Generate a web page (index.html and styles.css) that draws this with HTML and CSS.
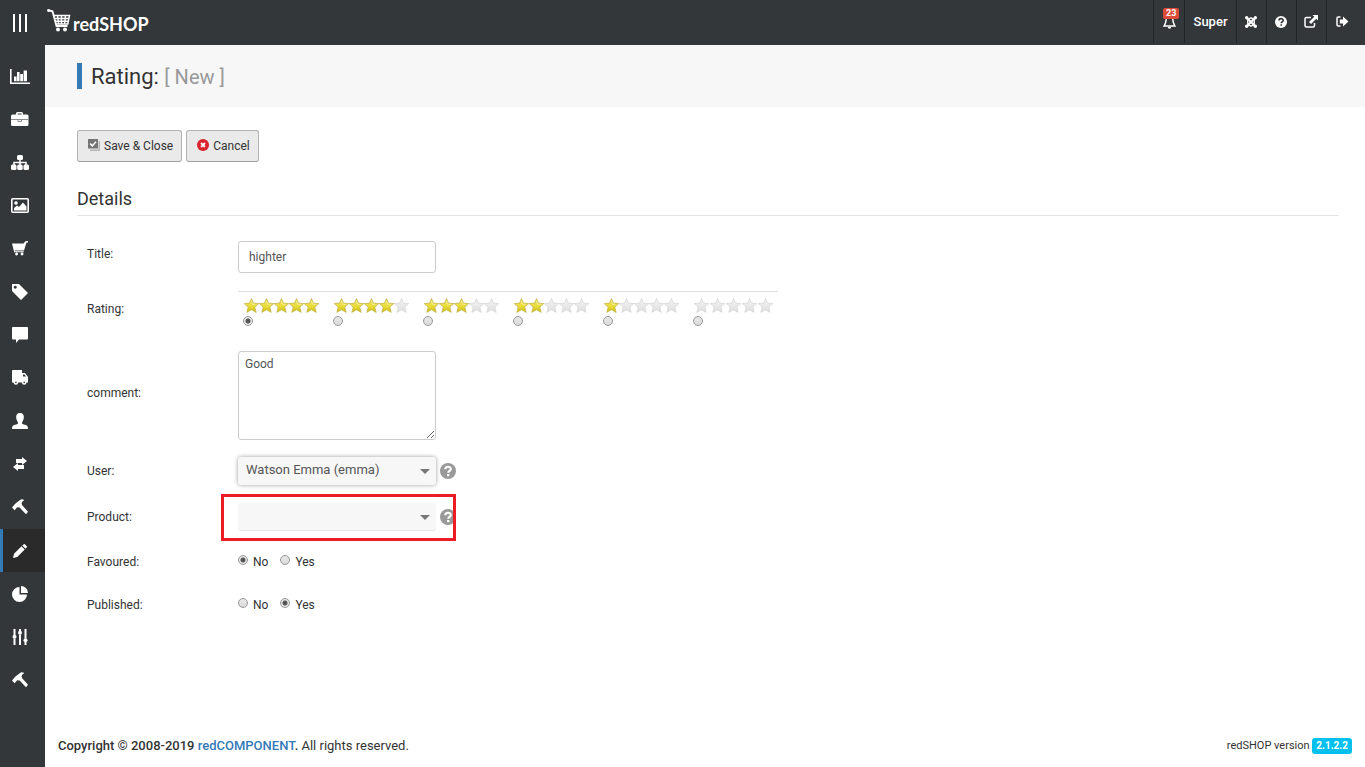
FILE: index.html
```html
<!DOCTYPE html>
<html lang="en">
<head>
<meta charset="utf-8">
<title>Rating: New - redSHOP</title>
<link rel="stylesheet" href="styles.css">
</head>
<body>
<svg class="defs" aria-hidden="true">
  <defs>
    <linearGradient id="gold" x1="0" y1="0" x2="0" y2="1"><stop offset="0" stop-color="#eee36a"/><stop offset="0.55" stop-color="#e9dc3c"/><stop offset="1" stop-color="#cdbd10"/></linearGradient>
    <linearGradient id="silver" x1="0" y1="0" x2="0" y2="1"><stop offset="0" stop-color="#f4f4f4"/><stop offset="1" stop-color="#dedede"/></linearGradient>
    <symbol id="star-on" viewBox="0 0 15 15"><path d="M7.5 .5l2 4.600 5.300 .5-4 3.500 1.400 5.300-4.700-2.700-4.700 2.700 1.400-5.300L.2 5.600l5.300-.5z" fill="url(#gold)" stroke="#c0b04a" stroke-width=".7"/><path d="M7.500 3.200l1 3 3 .2" fill="none" stroke="#f8f3a8" stroke-width=".8"/></symbol>
    <symbol id="star-off" viewBox="0 0 15 15"><path d="M7.500 .5l2 4.600 5.300 .5-4 3.500 1.400 5.300-4.700-2.700-4.700 2.700 1.400-5.300L.2 5.600l5.300-.5z" fill="url(#silver)" stroke="#d4d4d4" stroke-width=".7"/></symbol>
    <symbol id="hammer" viewBox="0 0 16 16"><path d="M0 8.500L3.200 4.800 8 .9C9.300 0 11 .2 12.300 1.200L10.300 2.600 9.600 4.300 10 6 16 12.800 14 15.200 7.600 8.600 5.200 8.300 2.600 11.200z" fill="#fff"/></symbol>
    <symbol id="help" viewBox="0 0 16 16"><circle cx="8" cy="8" r="8" fill="#999"/><path d="M5.300 6.300C5.300 2.900 10.800 3 10.800 6c0 1.900-2.500 1.900-2.500 3.700" fill="none" stroke="#fff" stroke-width="2.200"/><path d="M7.100 11h2.300v2.200H7.100z" fill="#fff"/></symbol>
  </defs>
</svg>

<header class="topbar">
  <button class="menu-toggle" type="button" aria-label="Toggle navigation"><i></i><i></i><i></i></button>
  <a class="logo" href="#">
    <svg width="24" height="24" viewBox="0 0 24 24" fill="none" stroke="#fff"><circle cx="1.500" cy="1.500" r="1.400" fill="#fff" stroke="none"/><path d="M2 1.500l3.500.8L9.500 17h11" stroke-width="1.800"/><path d="M6.500 6.500H22.500L20.800 15H9M7.200 9.500h14.500M8 12.300h13M10.500 6.500l1.200 8.500M14.500 6.500V15M18.500 6.500L17.600 15" stroke-width="1.500"/><circle cx="11" cy="20.500" r="2" fill="#fff" stroke="none"/><circle cx="18" cy="20.500" r="2" fill="#fff" stroke="none"/></svg>
    <span>redSHOP</span>
  </a>
  <nav class="topnav" aria-label="User">
    <a class="bell" href="#" aria-label="Notifications"><svg width="13" height="14" viewBox="0 0 13 14"><path d="M4 1C3 3 3.600 7 1.200 11h10.600C9.400 7 10 3 9 1" fill="none" stroke="#fff" stroke-width="1.500"/><path d="M4.800 12h3.400a1.700 1.700 0 0 1-3.400 0z" fill="#fff"/></svg><span class="badge">23</span></a>
    <a class="user" href="#">Super</a>
    <a class="tool" href="#" aria-label="Joomla"><svg width="12" height="12" viewBox="0 0 12 12"><g fill="none" stroke="#fff" stroke-width="2"><path d="M2 2l8 8M10 2l-8 8"/><path d="M3 3.500L6 1.800 9 3.500M3 8.500l3 1.700 3-1.700M2.800 3.500v5M9.200 3.500v5" stroke-width="1.400"/></g><g fill="#fff"><circle cx="1.700" cy="1.700" r="1.700"/><circle cx="10.300" cy="1.700" r="1.700"/><circle cx="1.700" cy="10.300" r="1.700"/><circle cx="10.300" cy="10.300" r="1.700"/></g></svg></a>
    <a class="tool" href="#" aria-label="Help"><svg width="12" height="12" viewBox="0 0 12 12"><circle cx="6" cy="6" r="6" fill="#fff"/><path d="M4 4.600C4 2 8.200 2.100 8.200 4.400 8.200 5.800 6.200 5.700 6.200 7.200" fill="none" stroke="#33373a" stroke-width="1.600"/><path d="M5.400 8.200H7v1.600H5.400z" fill="#33373a"/></svg></a>
    <a class="tool" href="#" aria-label="Open site"><svg width="14" height="13" viewBox="0 0 14 13"><path d="M7 2.500H2.500Q1 2.500 1 4v6.500Q1 12 2.500 12H9q1.500 0 1.500-1.500V8" fill="none" stroke="#fff" stroke-width="1.500"/><path d="M8.500 0H14v5.500L12.300 3.800 7 9 5 7l5.300-5.300z" fill="#fff"/></svg></a>
    <a class="tool last" href="#" aria-label="Log out"><svg width="13" height="11" viewBox="0 0 13 11"><path d="M4.500 1H2.300Q1 1 1 2.300v6.400Q1 10 2.300 10h2.200" fill="none" stroke="#fff" stroke-width="1.500"/><path d="M3.800 3.500H7V.5l5.500 5L7 10.500v-3H3.800z" fill="#fff"/></svg></a>
  </nav>
</header>

<div class="shell">
  <nav class="sidebar" aria-label="Main">
    <a href="#" aria-label="Statistics"><svg width="20" height="16" viewBox="0 0 20 16" fill="#fff"><path d="M0 0h1.600v13.500H20V15H0zM4 7.500h2.600v4.700H4zM7 3h2.600v9.200H7zM10.200 5h2.800v7.200h-2.800zM13.600 1.500h3.400v10.700h-3.400z"/></svg></a>
    <a href="#" aria-label="Orders"><svg width="18" height="15" viewBox="0 0 18 15"><path d="M5 2.500V1.500Q5 0 6.500 0h4Q12 0 12 1.500v1h4q1.500 0 1.500 1.500v8.500Q17.500 14 16 14H1.500Q0 14 0 12.500V4q0-1.500 1.500-1.500zM6.600 2.500h4v-1h-4z" fill="#fff" fill-rule="evenodd"/><path d="M0 7.500h17.500M7 7.500v2h3.500v-2" fill="none" stroke="#8a8c8e"/></svg></a>
    <a href="#" aria-label="Categories"><svg width="18" height="16" viewBox="0 0 18 16"><path d="M9 4v6M3 11V7.500h12V11" fill="none" stroke="#fff" stroke-width="1.500"/><g fill="#fff"><rect x="6" y="0" width="6" height="5" rx="1.500"/><rect x="0" y="9.500" width="5.500" height="5.500" rx="1.500"/><rect x="6.200" y="9.500" width="5.500" height="5.500" rx="1.500"/><rect x="12.500" y="9.500" width="5.500" height="5.500" rx="1.500"/></g></svg></a>
    <a href="#" aria-label="Media"><svg width="18" height="15" viewBox="0 0 18 15"><rect x=".8" y=".8" width="16.400" height="13.400" rx="1" fill="none" stroke="#fff" stroke-width="1.600"/><circle cx="5" cy="5" r="1.800" fill="#fff"/><path d="M3 12.500V10l3-2.500 2 1.500 4-4.500 3.500 4v4z" fill="#fff"/></svg></a>
    <a href="#" aria-label="Cart"><svg width="16" height="15" viewBox="0 0 16 15"><path d="M0 2.500h11.500L13 .8Q13.500 0 14.500 0H16v1.500h-1.500L12 9.500H2.500L2.800 10.200h9v1H2.200zM4.500 11.600a1.400 1.400 0 1 0 .1 0zM10 11.600a1.400 1.400 0 1 0 .1 0z" fill="#fff"/></svg></a>
    <a href="#" aria-label="Discounts"><svg width="16" height="16" viewBox="0 0 16 16"><path d="M0 0h7l9 9-7 7-9-9zM3.200 1.800a1.500 1.500 0 1 0 .1 0z" fill="#fff" fill-rule="evenodd"/></svg></a>
    <a href="#" aria-label="Communication"><svg width="16" height="16" viewBox="0 0 16 16"><path d="M1 0h14q1 0 1 1v10.500q0 1-1 1H7L4 16v-3.500H1q-1 0-1-1V1q0-1 1-1z" fill="#fff"/></svg></a>
    <a href="#" aria-label="Shipping"><svg width="16" height="15" viewBox="0 0 16 15"><path d="M1 0h9v3h3l3 4v5.500h-1.500a2.300 2.300 0 0 1-4.600 0H6.200a2.300 2.300 0 0 1-4.600 0H0V1q0-1 1-1z" fill="#fff"/><path d="M11 4.400h1.500L14 6.600h-3z" fill="#33373a"/><circle cx="3.900" cy="12.400" r=".8" fill="#33373a"/><circle cx="12.200" cy="12.400" r=".8" fill="#33373a"/></svg></a>
    <a href="#" aria-label="Users"><svg width="16" height="16" viewBox="0 0 16 16"><path d="M8 0c3 0 4.200 2 3.800 5-.3 2.500-1.800 3.500-1.800 5 0 1 1 1.400 3 1.700 2.200.4 3 1.300 3 4.300H0c0-3 .8-3.900 3-4.300 2-.3 3-.7 3-1.700 0-1.500-1.500-2.500-1.800-5C3.800 2 5 0 8 0z" fill="#fff"/></svg></a>
    <a href="#" aria-label="Import / Export"><svg width="14" height="14" viewBox="0 0 14 14"><path d="M3 2h6V0l5 4-5 4V6H3zM11 8v4H5v2L0 10l5-4v2z" fill="#fff"/></svg></a>
    <a href="#" aria-label="Customization"><svg width="16" height="16"><use href="#hammer"/></svg></a>
    <a class="active" href="#" aria-label="Customer input" aria-current="page"><svg width="14" height="14" viewBox="0 0 14 14"><path d="M0 14l1-4.200L8.500 2.300l3.200 3.200L4.200 13zM9.300 1.500L10.500.4q.8-.8 1.600 0l1.500 1.500q.8.800 0 1.600l-1.100 1.200z" fill="#fff"/></svg></a>
    <a href="#" aria-label="Reports"><svg width="16" height="16" viewBox="0 0 16 16"><path d="M7.500 1v7.500H15A7.500 7.500 0 1 1 7.500 1zM9 0a7 7 0 0 1 7 7H9z" fill="#fff"/></svg></a>
    <a href="#" aria-label="Configuration"><svg width="16" height="16" viewBox="0 0 16 16"><path d="M1.500 0h2v6h-2zM1.500 9.500h2V16h-2zM7 0h2v2H7zM7 5.500h2V16H7zM12.500 0h2v9.500h-2zM12.500 13h2v3h-2z" fill="#fff"/><g fill="#fff"><circle cx="2.500" cy="7.800" r="2"/><circle cx="8" cy="3.800" r="2"/><circle cx="13.500" cy="11.300" r="2"/></g></svg></a>
    <a href="#" aria-label="Tools"><svg width="16" height="16"><use href="#hammer"/></svg></a>
  </nav>

  <div class="page">
    <div class="page-title"><h1>Rating: <small>[ New ]</small></h1></div>
    <main class="content">
      <div class="toolbar">
        <button class="btn" type="button"><svg width="12" height="12" viewBox="0 0 12 12"><path d="M2 10.500h8.500V2H12v10H2z" fill="#b5b5b5"/><path d="M0 0h10v9.500H0z" fill="#757575"/><path d="M2 4.500l2.300 2.300L8 2.800" fill="none" stroke="#fff" stroke-width="1.500"/></svg>Save &amp; Close</button>
        <button class="btn" type="button"><svg width="12" height="12" viewBox="0 0 12 12"><circle cx="6" cy="6" r="6" fill="#d9222a"/><path d="M4 4l4 4M8 4L4 8" stroke="#fff" stroke-width="1.800"/></svg>Cancel</button>
      </div>
      <form>
        <h2>Details</h2>
        <div class="rows">
          <div class="row raised"><label for="title">Title:</label><input class="field" id="title" type="text" value="highter"></div>
          <div class="row raised" role="radiogroup" aria-labelledby="rating-label"><span class="label" id="rating-label">Rating:</span>
            <div class="ratings">
              <label><span class="stars"><svg><use href="#star-on"/></svg><svg><use href="#star-on"/></svg><svg><use href="#star-on"/></svg><svg><use href="#star-on"/></svg><svg><use href="#star-on"/></svg></span><input type="radio" name="rating" value="5" aria-label="5 stars" checked></label>
              <label><span class="stars"><svg><use href="#star-on"/></svg><svg><use href="#star-on"/></svg><svg><use href="#star-on"/></svg><svg><use href="#star-on"/></svg><svg><use href="#star-off"/></svg></span><input type="radio" name="rating" value="4" aria-label="4 stars"></label>
              <label><span class="stars"><svg><use href="#star-on"/></svg><svg><use href="#star-on"/></svg><svg><use href="#star-on"/></svg><svg><use href="#star-off"/></svg><svg><use href="#star-off"/></svg></span><input type="radio" name="rating" value="3" aria-label="3 stars"></label>
              <label><span class="stars"><svg><use href="#star-on"/></svg><svg><use href="#star-on"/></svg><svg><use href="#star-off"/></svg><svg><use href="#star-off"/></svg><svg><use href="#star-off"/></svg></span><input type="radio" name="rating" value="2" aria-label="2 stars"></label>
              <label><span class="stars"><svg><use href="#star-on"/></svg><svg><use href="#star-off"/></svg><svg><use href="#star-off"/></svg><svg><use href="#star-off"/></svg><svg><use href="#star-off"/></svg></span><input type="radio" name="rating" value="1" aria-label="1 star"></label>
              <label><span class="stars none"><svg><use href="#star-off"/></svg><svg><use href="#star-off"/></svg><svg><use href="#star-off"/></svg><svg><use href="#star-off"/></svg><svg><use href="#star-off"/></svg></span><input type="radio" name="rating" value="0" aria-label="No stars"></label>
            </div>
          </div>
          <div class="row raised"><label for="comment">comment:</label><textarea class="field" id="comment">Good</textarea></div>
          <div class="row"><label for="user">User:</label>
            <div class="picker focus"><span class="select"><select id="user"><option>Watson Emma (emma)</option></select></span><svg width="16" height="16"><use href="#help"/></svg></div>
          </div>
          <div class="row"><label for="product">Product:</label>
            <div class="picker"><span class="select"><select id="product"><option></option></select></span><svg width="16" height="16"><use href="#help"/></svg><span class="highlight"></span></div>
          </div>
          <div class="row" role="radiogroup" aria-labelledby="fav-label"><span class="label" id="fav-label">Favoured:</span>
            <div class="choices"><label><input type="radio" name="favoured" checked><span>No</span></label><label><input type="radio" name="favoured"><span>Yes</span></label></div>
          </div>
          <div class="row" role="radiogroup" aria-labelledby="pub-label"><span class="label" id="pub-label">Published:</span>
            <div class="choices"><label><input type="radio" name="published"><span>No</span></label><label><input type="radio" name="published" checked><span>Yes</span></label></div>
          </div>
        </div>
      </form>
    </main>
    <footer class="footer">
      <div><strong>Copyright © 2008-2019 <a href="#">redCOMPONENT</a>.</strong> All rights reserved.</div>
      <div class="version">redSHOP version <span>2.1.2.2</span></div>
    </footer>
  </div>
</div>
</body>
</html>
```

FILE: styles.css
```css
* { box-sizing: border-box; }
body {
  margin: 0;
  min-height: 100vh;
  display: flex;
  flex-direction: column;
  background: #fff;
  color: #333;
  font: 12px/18px Roboto, "Liberation Sans", sans-serif;
}
a { text-decoration: none; color: inherit; }
svg { display: block; flex: none; }
.defs { position: absolute; width: 0; height: 0; }
button, input, select, textarea { font: inherit; color: inherit; margin: 0; }

.topbar { display: flex; height: 45px; background: #33373a; color: #fff; }
.menu-toggle {
  display: flex;
  align-items: center;
  justify-content: center;
  gap: 4px;
  width: 40px;
  padding: 0;
  border: 0;
  background: none;
}
.menu-toggle i { width: 2px; height: 18px; background: #fff; }
.logo { display: flex; align-items: flex-start; gap: 2px; padding: 9px 0 0 7px; }
.logo span { padding-top: 4px; font: bold 18px/22px Lato, "Liberation Sans", sans-serif; }
.topnav { display: flex; height: 43px; margin-left: auto; }
.topnav a {
  display: flex;
  align-items: center;
  justify-content: center;
  border-left: 1px solid #222528;
}
.topnav .bell { position: relative; width: 31px; }
.badge {
  position: absolute;
  top: 8px;
  left: 9px;
  padding: 0 3px;
  border-radius: 2px;
  background: #dd4b39;
  font: bold 9px/11px Roboto, sans-serif;
}
.topnav .user { width: 52px; font-size: 13px; font-weight: 500; }
.topnav .tool { width: 30px; padding-right: 1px; }
.topnav .last { width: 39px; padding-right: 8px; }

.shell { flex: 1; display: flex; }
.sidebar { width: 45px; flex: none; padding-top: 11px; background: #33373a; }
.sidebar a {
  display: flex;
  align-items: center;
  justify-content: center;
  height: 43px;
  padding: 0 5px 2px 0;
}
.sidebar .active, .sidebar .active ~ a { padding-bottom: 0; }
.sidebar .active { padding-right: 8px; border-left: 3px solid #337ab7; background: #2a2a2a; }

.page { flex: 1; min-width: 0; display: flex; flex-direction: column; }
.page-title { padding: 18px 32px; background: #f7f7f7; }
h1 {
  margin: 0;
  padding: 1px 0 0 9px;
  border-left: 5px solid #337ab7;
  font-size: 22px;
  font-weight: 400;
  line-height: 25px;
}
h1 small { font-size: 20px; line-height: 20px; color: #999; }
.content { flex: 1; padding: 23px 26px 0 32px; }
.toolbar { display: flex; gap: 4px; }
.btn {
  display: flex;
  align-items: center;
  gap: 4px;
  height: 32px;
  padding: 0 8px 0 10px;
  border: 1px solid #b3b3b3;
  border-bottom-color: #a0a0a0;
  border-radius: 3px;
  background: #eaeaea;
}
.btn svg { margin-bottom: 2px; }
h2 {
  margin: 24px 0 25px;
  padding-bottom: 4px;
  border-bottom: 1px solid #e5e5e5;
  font-size: 18px;
  font-weight: 400;
  line-height: 25px;
}
.rows { display: grid; gap: 16px; }
.row { display: grid; grid-template-columns: 151px 1fr; align-items: center; min-height: 27px; padding-left: 10px; }
.raised > label, .raised > .label { padding-bottom: 6px; }
.field {
  width: 198px;
  height: 32px;
  padding: 0 10px;
  border: 1px solid #ccc;
  border-radius: 3px;
  background: #fff;
  color: #555;
}
textarea.field { display: block; height: 89px; padding: 3px 6px; resize: vertical; }
input[type="radio"] {
  appearance: none;
  display: block;
  width: 10px;
  height: 10px;
  border: 1px solid #999;
  border-radius: 50%;
  background: linear-gradient(#e8e8e8, #dadada);
}
input[type="radio"]:checked { background: radial-gradient(circle, #555 2px, #e6e6e6 3px); }
.ratings {
  display: grid;
  grid-template-columns: repeat(6, 90px);
  height: 44px;
  width: 540px;
  margin-top: 2px;
  padding-top: 6px;
  border-top: 1px solid #ddd;
}
.ratings label { padding-left: 5px; }
.stars { display: flex; margin: 0 0 3px 1px; }
.stars svg { width: 15px; height: 15px; }
.stars.none { gap: 1px; }
.picker { position: relative; display: flex; align-items: center; gap: 4px; min-height: 30px; }
.select { position: relative; width: 198px; height: 28px; }
.select::after {
  content: "";
  position: absolute;
  top: 12px;
  right: 6px;
  border: 5px solid transparent;
  border-top-color: #777;
  border-bottom: 0;
}
select {
  appearance: none;
  display: block;
  width: 100%;
  height: 28px;
  padding: 0 20px 3px 8px;
  border: 0;
  border-bottom: 1px solid #e5e5e5;
  border-radius: 3px;
  background: #f7f7f7;
  color: #555;
  font-size: 13px;
}
.focus select { border-bottom: 0; box-shadow: 0 0 4px rgba(0, 0, 0, .4); }
.highlight {
  position: absolute;
  top: -8px;
  left: -17px;
  width: 235px;
  height: 47px;
  border: 3px solid #ed1c24;
}
.choices { display: flex; gap: 12px; }
.choices label { display: flex; gap: 5px; }
.choices input { margin-top: 2px; }

.footer { display: flex; justify-content: space-between; align-items: center; padding: 12px 13px; font-size: 13px; }
.footer a { color: #337ab7; }
.footer strong { font-weight: 500; }
.version { font-size: 11px; }
.version span {
  display: inline-block;
  padding: 0 4px;
  border-radius: 3px;
  background: #00c0ef;
  color: #fff;
  font-size: 10px;
  font-weight: 700;
  line-height: 16px;
}
```
